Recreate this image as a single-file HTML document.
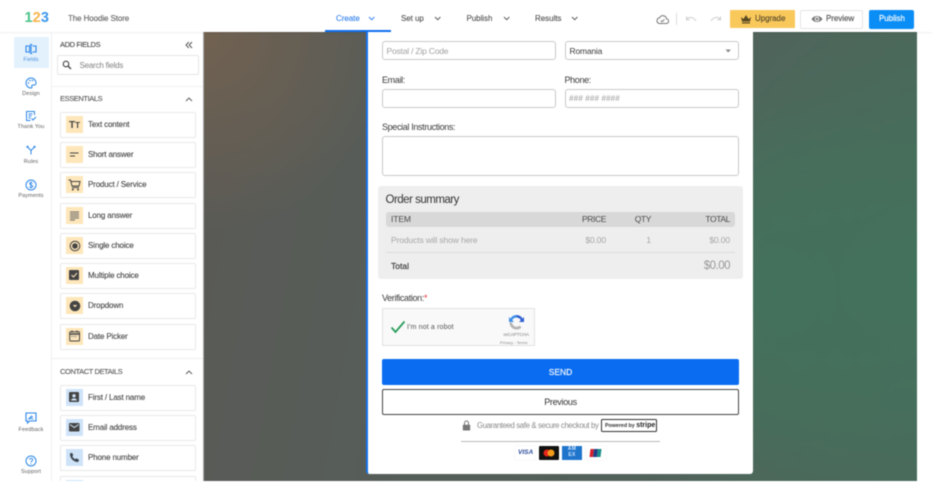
<!DOCTYPE html>
<html><head><meta charset="utf-8"><style>
html,body{margin:0;padding:0;background:#fff;width:932px;height:497px;overflow:hidden}
#w{position:absolute;left:0;top:0;width:932px;height:497px;overflow:hidden;filter:blur(.42px);font-family:"Liberation Sans",sans-serif}
#w div,#w span.a,#w svg{position:absolute}
.t{position:absolute;white-space:nowrap;line-height:12px;height:12px}
.nav{font-size:8px;color:#4e4e4e;letter-spacing:-.05px;top:13px;-webkit-text-stroke:.1px #4e4e4e}
.chev{fill:none;stroke:#555;stroke-width:.9}
.rl{font-size:5.5px;color:#5e5e5e;width:50px;left:6px;text-align:center;letter-spacing:.1px}
.it{left:60px;width:134px;height:24px;background:#fff;border:1px solid #e9e9e9;border-radius:1.5px}
.ib{left:5px;top:3px;width:16.5px;height:17px;background:#fde6ba}
.ib.b{background:#cfe3f8}
.il{left:27px;top:6px;font-size:8px;color:#444;letter-spacing:-.15px;-webkit-text-stroke:.1px #444}
.hd{font-size:7.5px;color:#555;letter-spacing:-.4px;-webkit-text-stroke:.08px #555}
.inp{background:#fff;border:1px solid #c9c9c9;border-radius:3px;box-sizing:border-box}
.lb{font-size:9px;color:#3a3a3a;letter-spacing:-.35px}
.ph{font-size:8.5px;color:#9a9a9a}
.r{text-align:right}
.th{font-size:8.5px;color:#4a4a4a;letter-spacing:-.4px;top:213px}
.td{font-size:8.5px;color:#a6a6a6;letter-spacing:-.12px;top:234px}
</style></head><body><div id="w">

<!-- canvas -->
<div style="left:204px;top:32px;width:713px;height:449px;background:radial-gradient(ellipse 190px 200px at 0 0,rgba(120,100,80,.8),rgba(120,100,80,0) 100%),radial-gradient(ellipse 320px 300px at 100% 55%,#43725c 0%,rgba(67,114,92,0) 100%),radial-gradient(ellipse 190px 200px at 570px 260px,#43725c,rgba(67,114,92,0)),linear-gradient(100deg,#5a5a56 0%,#555f5a 45%,#4c685c 100%)"></div>
<div style="left:203px;top:32px;width:1px;height:449px;background:#aaa"></div>

<!-- top bar -->
<div style="left:0;top:0;width:932px;height:32px;background:#fff;box-shadow:0 1px 2px rgba(0,0,0,.07)"></div>
<span class="t" style="left:24.500px;top:11px;font-size:14.500px;line-height:15px;height:15px;font-weight:bold;letter-spacing:.1px"><span style="color:#4cc38a">1</span><span style="color:#f8b54c">2</span><span style="color:#3d97ea">3</span></span>
<span class="t" style="left:68px;top:13px;font-size:8px;color:#5e5e5e;letter-spacing:-.1px;-webkit-text-stroke:.1px #5e5e5e">The Hoodie Store</span>

<span class="t nav" style="left:336px;color:#2f7fee;-webkit-text-stroke:.1px #2f7fee">Create</span>
<svg style="left:368px;top:16px" width="8" height="5"><path class="chev" style="stroke:#2f7fee" d="M1 1l2.700 2.700 2.700-2.700"/></svg>
<span class="t nav" style="left:401px">Set up</span>
<svg style="left:433.500px;top:16px" width="8" height="5"><path class="chev" d="M1 1l2.700 2.700 2.700-2.700"/></svg>
<span class="t nav" style="left:466.500px">Publish</span>
<svg style="left:502.500px;top:16px" width="8" height="5"><path class="chev" d="M1 1l2.700 2.700 2.700-2.700"/></svg>
<span class="t nav" style="left:535px">Results</span>
<svg style="left:571px;top:16px" width="8" height="5"><path class="chev" d="M1 1l2.700 2.700 2.700-2.700"/></svg>
<div style="left:325px;top:30px;width:66px;height:2px;background:#0d6ef0"></div>

<svg style="left:656px;top:14px" width="13" height="11" viewBox="0 0 13 11"><path d="M3 9.500h7.200a2.300 2.300 0 0 0 .3-4.600A3.600 3.600 0 0 0 3.700 3.700 3 3 0 0 0 3 9.500z" fill="none" stroke="#777" stroke-width="1"/><path d="M4.800 6.500l1.300 1.300 2.300-2.500" fill="none" stroke="#777" stroke-width=".9"/></svg>
<div style="left:676px;top:13px;width:1px;height:12px;background:#ddd"></div>
<svg style="left:685px;top:15px" width="12" height="8" viewBox="0 0 12 8"><path d="M1.500 4.500C4 1.500 8 1.500 11 6M1.500 1.500v3.200h3.200" fill="none" stroke="#ccc" stroke-width="1"/></svg>
<svg style="left:710px;top:15px" width="12" height="8" viewBox="0 0 12 8"><path d="M10.500 4.500C8 1.500 4 1.500 1 6M10.500 1.500v3.200H7.300" fill="none" stroke="#ccc" stroke-width="1"/></svg>

<div style="left:730px;top:10px;width:65px;height:18px;background:#f9c85b;border-radius:1px"></div>
<svg style="left:740px;top:14px" width="12" height="10" viewBox="0 0 12 10"><path d="M1 3l2.500 2L6 1l2.500 4L11 3l-1 4.500H2zM2 8.200h8V9.500H2z" fill="#5a4a22"/></svg>
<span class="t" style="left:755px;top:13px;font-size:8px;color:#5a4d2c;letter-spacing:-.05px;-webkit-text-stroke:.15px #5a4d2c">Upgrade</span>
<div style="left:800px;top:9.500px;width:63px;height:19px;background:#fff;border:1px solid #e4e4e4;border-radius:2px;box-sizing:border-box"></div>
<svg style="left:811px;top:14px" width="12" height="10" viewBox="0 0 12 10"><path d="M.5 5C3 1 9 1 11.500 5 9 9 3 9 .5 5z" fill="#777"/><circle cx="6" cy="5" r="2.300" fill="#fff"/><circle cx="6" cy="5" r="1.300" fill="#777"/></svg>
<span class="t" style="left:826px;top:13px;font-size:8px;color:#555;letter-spacing:-.05px;-webkit-text-stroke:.15px #555">Preview</span>
<div style="left:869px;top:9.500px;width:45px;height:19px;background:#0a8df5;border-radius:2px"></div>
<span class="t" style="left:879px;top:13px;font-size:8px;color:#fff;letter-spacing:-.05px;-webkit-text-stroke:.15px #fff">Publish</span>

<!-- rail -->
<div style="left:51px;top:32px;width:1px;height:449px;background:#f0f0f0"></div>
<div style="left:13.500px;top:37px;width:35.500px;height:31px;background:#e3f1fd;border-radius:1px"></div>

<svg style="left:25px;top:44px" width="12" height="10" viewBox="0 0 12 10"><path d="M1 2h3.500v6H1zM7.500 2H11v6H7.500M6 .5v9M4.800 .5h2.400M4.800 9.500h2.400" fill="none" stroke="#2c86e8" stroke-width="1.100"/></svg>
<span class="t rl" style="top:54px;color:#4a8fdc">Fields</span>

<svg style="left:25px;top:77px" width="12" height="12" viewBox="0 0 12 12"><path d="M6 1a5 5 0 1 0 0 10c1.200 0 1.200-1 .8-1.600-.4-.8.2-1.400 1-1.400H9.500A1.800 1.800 0 0 0 11 6 5 5 0 0 0 6 1z" fill="none" stroke="#2c86e8" stroke-width="1"/><circle cx="3.500" cy="6" r=".8" fill="#2c86e8"/><circle cx="5" cy="3.500" r=".8" fill="#2c86e8"/><circle cx="7.500" cy="3.500" r=".8" fill="#2c86e8"/></svg>
<span class="t rl" style="top:88px">Design</span>

<svg style="left:25px;top:110px" width="12" height="12" viewBox="0 0 12 12"><path d="M9.500 5V1.500h-8v9h4M3.500 4h4M3.500 6h3M3.500 8h2" fill="none" stroke="#2c86e8" stroke-width="1"/><path d="M6.500 8.500l1.500 1.500 3-3" fill="none" stroke="#2c86e8" stroke-width="1"/></svg>
<span class="t rl" style="top:121px">Thank You</span>

<svg style="left:26px;top:145px" width="10" height="10" viewBox="0 0 10 10"><path d="M5 9.500V5.500L1.500 2M5 5.500L8.500 2" fill="none" stroke="#2c86e8" stroke-width="1"/><circle cx="1.500" cy="1.800" r="1.100" fill="#2c86e8"/><circle cx="8.500" cy="1.800" r="1.100" fill="#2c86e8"/></svg>
<span class="t rl" style="top:155.500px">Rules</span>

<svg style="left:25px;top:179px" width="12" height="12" viewBox="0 0 12 12"><circle cx="6" cy="6" r="5" fill="none" stroke="#2c86e8" stroke-width="1"/><path d="M7.800 4.200C7.300 3.300 4.500 3.200 4.500 4.600 4.500 6.200 7.800 5.600 7.800 7.300 7.800 8.800 4.800 8.700 4.200 7.700M6 2.500v7" fill="none" stroke="#2c86e8" stroke-width=".8"/></svg>
<span class="t rl" style="top:189.500px">Payments</span>

<svg style="left:25px;top:412px" width="12" height="12" viewBox="0 0 12 12"><path d="M1 1h10v8H4.500L2.500 11V9H1z" fill="none" stroke="#2c86e8" stroke-width="1.100"/><path d="M3.500 7l3-3 1 1-3 2zM6 7h2.500" fill="none" stroke="#2c86e8" stroke-width=".8"/></svg>
<span class="t rl" style="top:424px">Feedback</span>

<svg style="left:25px;top:455px" width="12" height="12" viewBox="0 0 12 12"><circle cx="6" cy="6" r="5" fill="none" stroke="#2c86e8" stroke-width="1"/><path d="M4.500 4.700C4.500 3 7.700 3 7.700 4.800 7.700 6 6 6 6 7.500M6 8.500v1" fill="none" stroke="#2c86e8" stroke-width=".9"/></svg>
<span class="t rl" style="top:466px">Support</span>

<!-- panel -->
<span class="t hd" style="left:60px;top:39px;color:#3c3c3c">ADD FIELDS</span>
<svg style="left:185px;top:41px" width="8" height="8" viewBox="0 0 8 8"><path d="M3.800 1L1 4l2.800 3M7 1L4.200 4 7 7" fill="none" stroke="#555" stroke-width="1"/></svg>
<div style="left:57px;top:55px;width:141.500px;height:20px;box-sizing:border-box;border:1px solid #e6e6e6;border-radius:2px;background:#fff"></div>
<svg style="left:62px;top:60px" width="10" height="10" viewBox="0 0 10 10"><circle cx="4" cy="4" r="2.800" fill="none" stroke="#444" stroke-width="1.100"/><path d="M6 6l3 3" stroke="#444" stroke-width="1.300"/></svg>
<span class="t" style="left:79.500px;top:59.500px;font-size:8px;color:#808080;letter-spacing:-.2px">Search fields</span>
<div style="left:52px;top:86px;width:151px;height:1px;background:#f2f2f2"></div>
<span class="t hd" style="left:60px;top:93px">ESSENTIALS</span>
<svg style="left:185px;top:96.500px" width="8" height="5"><path class="chev" d="M1 4l3-3 3 3"/></svg>

<div class="it" style="top:112px"><div class="ib"></div><span class="t" style="left:8px;top:6.500px;font-size:10px;font-weight:bold;color:#444">T<span style="font-size:8px">T</span></span><span class="t il">Text content</span></div>

<div class="it" style="top:142px"><div class="ib"></div><svg style="left:9px;top:8.500px" width="9" height="6"><path d="M0 1h8.500M0 4h5" stroke="#444" stroke-width="1.100"/></svg><span class="t il">Short answer</span></div>

<div class="it" style="top:172px"><div class="ib"></div><svg style="left:7px;top:6px" width="13" height="12" viewBox="0 0 13 12"><path d="M.5 1h2l1.500 6h7l1-4.500H3" fill="none" stroke="#444" stroke-width="1"/><path d="M4 8.500h7" stroke="#444"/><circle cx="4.800" cy="10.500" r="1" fill="#444"/><circle cx="10" cy="10.500" r="1" fill="#444"/></svg><span class="t il">Product / Service</span></div>

<div class="it" style="top:202.500px"><div class="ib"></div><svg style="left:8.500px;top:7px" width="10" height="11"><path d="M0 1h9M0 3h9M0 5h9M0 7h9M0 9h5" stroke="#666" stroke-width="1"/></svg><span class="t il">Long answer</span></div>

<div class="it" style="top:233px"><div class="ib"></div><svg style="left:7.500px;top:5.500px" width="12" height="12"><circle cx="6" cy="6" r="4.800" fill="none" stroke="#444" stroke-width="1"/><circle cx="6" cy="6" r="2.800" fill="#444"/></svg><span class="t il">Single choice</span></div>

<div class="it" style="top:263px"><div class="ib"></div><svg style="left:8px;top:6px" width="11" height="11"><rect width="10" height="10" rx="1" fill="#444"/><path d="M2.500 5l2 2 3.500-4" fill="none" stroke="#fde6ba" stroke-width="1"/></svg><span class="t il">Multiple choice</span></div>

<div class="it" style="top:293px"><div class="ib"></div><svg style="left:7.500px;top:5.500px" width="12" height="12"><circle cx="6" cy="6" r="5.300" fill="#444"/><path d="M3.800 5h4.400L6 7.300z" fill="#fde6ba"/></svg><span class="t il">Dropdown</span></div>

<div class="it" style="top:323.500px"><div class="ib"></div><svg style="left:7.500px;top:5.500px" width="12" height="12"><rect x=".7" y="1.700" width="9.800" height="9.300" rx="1" fill="none" stroke="#444" stroke-width="1"/><path d="M1 4h9.500" stroke="#444" stroke-width="1.500"/><path d="M3 .5v2M8 .5v2" stroke="#444"/><path d="M2.500 6.500h6" stroke="#888" stroke-width="1.500" stroke-dasharray="1 1"/></svg><span class="t il">Date Picker</span></div>

<div style="left:52px;top:358px;width:151px;height:1px;background:#f0f0f0"></div>
<span class="t hd" style="left:60px;top:366px">CONTACT DETAILS</span>
<svg style="left:185px;top:369.500px" width="8" height="5"><path class="chev" d="M1 4l3-3 3 3"/></svg>

<div class="it" style="top:384.500px"><div class="ib b"></div><svg style="left:8px;top:6px" width="11" height="11"><rect width="10" height="10" rx="1" fill="#444"/><circle cx="5" cy="3.800" r="1.700" fill="#cfe3f8"/><path d="M2 8.500c.5-2.800 5.500-2.800 6 0z" fill="#cfe3f8"/></svg><span class="t il">First / Last name</span></div>

<div class="it" style="top:415px"><div class="ib b"></div><svg style="left:7.500px;top:7px" width="11" height="9"><rect width="10.500" height="8.500" rx="1" fill="#444"/><path d="M1 1.500l4.300 3 4.300-3" fill="none" stroke="#cfe3f8" stroke-width="1"/></svg><span class="t il">Email address</span></div>

<div class="it" style="top:445px"><div class="ib b"></div><svg style="left:8px;top:6px" width="11" height="11" viewBox="0 0 11 11"><path d="M1 1.500L3 .7l1.300 2.600-1 1c.5 1.200 1.500 2.300 3 3l1-1L10 7.800 9.200 10C5 10.500 .5 6 1 1.500z" fill="#3c4650"/></svg><span class="t il">Phone number</span></div>

<div class="it" style="top:475.500px;height:20px"><div class="ib b"></div></div>
<div style="left:0;top:481px;width:932px;height:16px;background:#fff"></div>

<!-- form card -->
<div style="left:366px;top:32px;width:387px;height:442px;background:#fff;border-left:2px solid #1473ee;border-radius:0 0 3px 3px;box-sizing:border-box"></div>

<div class="inp" style="left:382px;top:40.500px;width:174px;height:19.500px"></div>
<span class="t ph" style="left:386.500px;top:44.500px;color:#a0a0a0;letter-spacing:-.2px">Postal / Zip Code</span>
<div class="inp" style="left:564.500px;top:40.500px;width:174.500px;height:19.500px"></div>
<span class="t" style="left:569.500px;top:44.500px;font-size:8.500px;color:#3a3a3a;letter-spacing:-.2px">Romania</span>
<svg style="left:724px;top:48.500px" width="8" height="5"><path d="M1.500 .5h5.500L4.200 3.500z" fill="#888"/></svg>

<span class="t lb" style="left:382px;top:73.500px">Email:</span>
<span class="t lb" style="left:564.500px;top:73.500px">Phone:</span>
<div class="inp" style="left:382px;top:88.500px;width:174px;height:19.500px"></div>
<div class="inp" style="left:564.500px;top:88.500px;width:174.500px;height:19.500px"></div>
<span class="t ph" style="left:569px;top:92.500px;font-style:italic;font-size:8px;letter-spacing:.15px">### ### ####</span>

<span class="t lb" style="left:382px;top:121px">Special Instructions:</span>
<div class="inp" style="left:382px;top:136px;width:357px;height:40px"></div>

<!-- summary -->
<div style="left:378px;top:186px;width:365px;height:92.500px;background:#eeeeee;border-radius:3px"></div>
<span class="t" style="left:385.500px;top:194px;font-size:11.500px;color:#333;letter-spacing:-.5px">Order summary</span>
<div style="left:385.500px;top:211.500px;width:349.500px;height:15px;background:#d8d8d8;border-radius:3px"></div>
<span class="t th" style="left:391px;letter-spacing:-.1px">ITEM</span>
<span class="t r th" style="right:326px">PRICE</span>
<span class="t r th" style="right:281px">QTY</span>
<span class="t r th" style="right:202px">TOTAL</span>
<span class="t td" style="left:391px">Products will show here</span>
<span class="t r td" style="right:326px">$0.00</span>
<span class="t r td" style="right:281px">1</span>
<span class="t r td" style="right:202px">$0.00</span>
<div style="left:385.500px;top:252px;width:349.500px;height:1px;background:#dcdcdc"></div>
<span class="t" style="left:391px;top:260px;font-size:8.500px;color:#333;-webkit-text-stroke:.15px #333">Total</span>
<span class="t r" style="right:202px;top:260px;font-size:11.500px;color:#999;letter-spacing:-.5px">$0.00</span>

<!-- captcha -->
<span class="t lb" style="left:382px;top:291.500px">Verification:<span style="color:#e33">*</span></span>
<div style="left:382px;top:308px;width:152.500px;height:38px;background:#f9f9f9;border:1px solid #e2e2e2;box-sizing:border-box"></div>
<svg style="left:390px;top:320px" width="16" height="14" viewBox="0 0 16 14"><path d="M1.500 7.500l4 4.500L14.500 1.500" fill="none" stroke="#2a9d5c" stroke-width="1.800"/></svg>
<span class="t" style="left:407px;top:322px;font-size:7px;color:#555;letter-spacing:.15px">I'm not a robot</span>
<svg style="left:508px;top:314px" width="17" height="17" viewBox="0 0 17 17"><path d="M8.500 1a7 7 0 0 1 6 3.500L16 3v5h-5l1.800-1.800A5 5 0 0 0 8.500 3.500z" fill="#2f5fd0"/><path d="M8.500 1a7 7 0 0 0-6 3.500L1 3v5h5L4.200 6.200a5 5 0 0 1 4.300-2.700z" fill="#3d8fe8"/><path d="M1.500 8.500a7 7 0 0 0 7 7c2.500 0 3.800-.8 5-2l-2-2c-.7.800-1.800 1.300-3 1.300A4.800 4.800 0 0 1 4 8.500z" fill="#b5b5b5"/></svg>
<span class="t" style="left:503.500px;top:329px;font-size:4.500px;color:#777">reCAPTCHA</span>
<span class="t" style="left:500px;top:337px;font-size:4px;color:#888">Privacy - Terms</span>

<!-- buttons -->
<div style="left:382px;top:359px;width:357px;height:26px;background:#0a6cf0;border-radius:2px"></div>
<span class="t" style="left:382px;width:357px;text-align:center;top:366px;font-size:8.500px;color:#fff;-webkit-text-stroke:.15px #fff">SEND</span>
<div style="left:382px;top:389px;width:357px;height:26px;background:#fff;border:1px solid #444;border-radius:2px;box-sizing:border-box"></div>
<span class="t" style="left:382px;width:357px;text-align:center;top:396px;font-size:9px;color:#333;letter-spacing:-.3px">Previous</span>

<!-- trust -->
<svg style="left:462px;top:420px" width="9" height="11" viewBox="0 0 9 11"><path d="M2.500 5V3a2 2 0 0 1 4 0v2" fill="none" stroke="#777" stroke-width="1"/><rect x=".8" y="4.800" width="7.400" height="5.700" rx=".6" fill="#777"/></svg>
<span class="t" style="left:477px;top:419.500px;font-size:7.800px;color:#8a8a8a;letter-spacing:-.37px">Guaranteed safe &amp; secure checkout by</span>
<div style="left:601px;top:419px;width:56px;height:13px;box-sizing:border-box;background:#fff;border:1px solid #333;border-radius:1.500px"></div>
<span class="t" style="left:605px;top:419.500px;font-size:5.300px;color:#333;font-weight:bold">Powered by <span style="font-size:7px;color:#222">stripe</span></span>
<div style="left:461px;top:441px;width:199px;height:1px;background:#bbb"></div>

<div style="left:515px;top:446px;width:20px;height:13.500px;background:#fff;box-shadow:0 0 1px #ddd"></div>
<span class="t" style="left:518px;top:447px;font-size:6.500px;font-weight:bold;color:#2a4a9c;font-style:italic">VISA</span>
<div style="left:538.500px;top:446px;width:20px;height:13.500px;background:#111;border-radius:1px"></div>
<svg style="left:542.500px;top:448.500px" width="12" height="8"><circle cx="4" cy="4" r="3.500" fill="#e8261c"/><circle cx="8" cy="4" r="3.500" fill="#f59a1a"/></svg>
<div style="left:562px;top:446px;width:20px;height:13.500px;background:#1f74cc;overflow:hidden"></div>
<span class="t" style="left:565px;top:447px;font-size:5px;line-height:5.500px;height:11px;width:14px;color:#cfe6fb;font-weight:bold;text-align:center;white-space:normal;letter-spacing:.3px">AM EX</span>
<div style="left:585.500px;top:446px;width:20px;height:13.500px;background:#fff;box-shadow:0 0 1px #ddd"></div>
<svg style="left:589px;top:448.500px" width="13" height="9"><path d="M1.500 0H5L4 8H.5z" fill="#d6202c"/><path d="M5 0h4L8 8H4z" fill="#1f3f86"/><path d="M9 0h3.500L11.500 8H8z" fill="#1a8f8a"/></svg>

</div></body></html>
